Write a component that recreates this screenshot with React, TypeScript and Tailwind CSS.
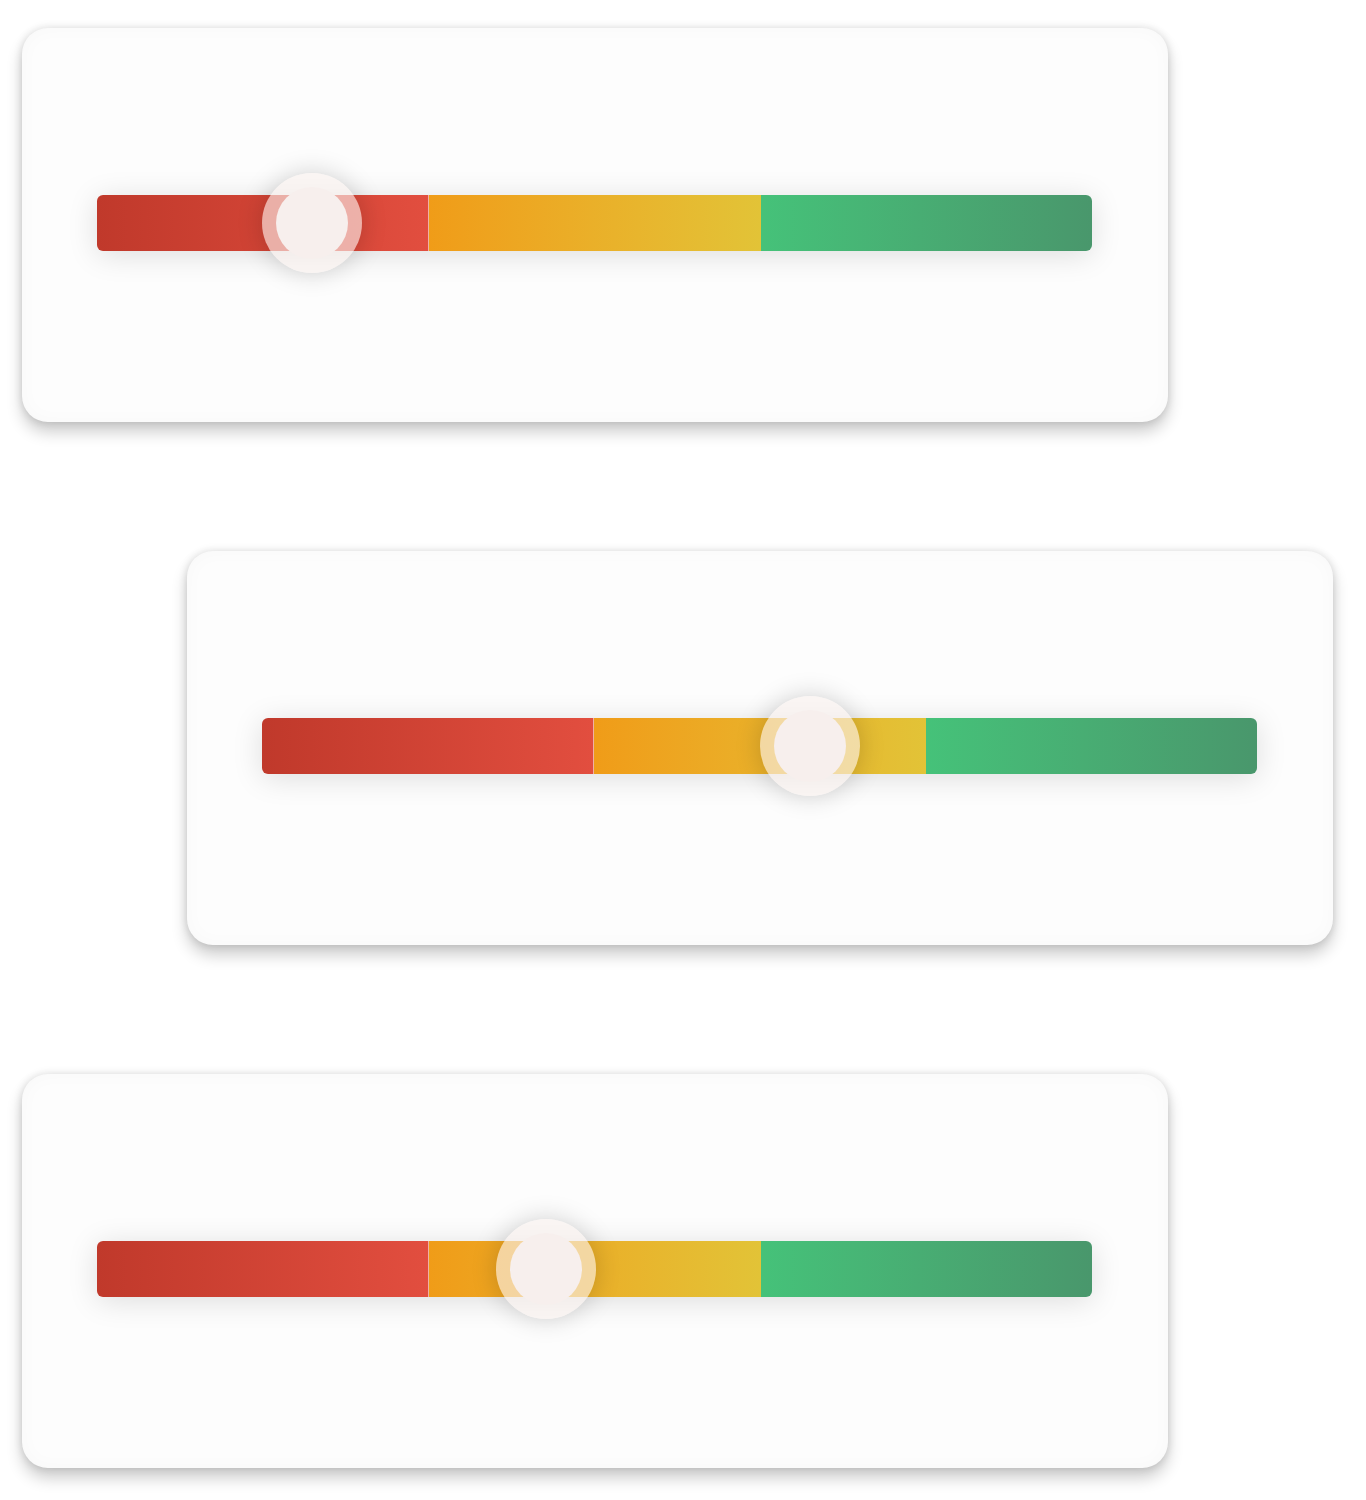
import React from "react";

type Scale = { value: number; shift?: boolean };

const scales: Scale[] = [
  { value: 21.6 },
  { value: 55.1, shift: true },
  { value: 45.1 },
];

function RiskBar({ value }: { value: number }) {
  return (
    <div className="relative h-[56px] w-[995px] rounded-[6px] shadow-[0_4px_30px_rgba(0,0,0,0.13)]">
      <div className="flex h-full w-full overflow-hidden rounded-[6px]">
        <div className="flex-1 bg-gradient-to-r from-[#c0392b] to-[#e24e3f]" />
        <div className="flex-1 border-l border-[#efb0a6] bg-gradient-to-r from-[#f09c18] to-[#e2c337]" />
        <div className="flex-1 bg-gradient-to-r from-[#45c279] to-[#49976c]" />
      </div>
      {/* thumb */}
      <div
        className="absolute top-1/2 flex h-[100px] w-[100px] -translate-x-1/2 -translate-y-1/2 items-center justify-center rounded-full bg-[rgba(248,240,238,0.62)] shadow-[0_0_26px_rgba(0,0,0,0.18)]"
        style={{ left: `${value}%` }}
      >
        <div className="h-[72px] w-[72px] rounded-full bg-[#f7efed]" />
      </div>
    </div>
  );
}

export default function App() {
  return (
    <div className="min-h-screen bg-white pb-[32px] pl-[22px] pt-[28px] font-['Inter',sans-serif]">
      <div className="flex flex-col gap-[129px]">
        {scales.map((s, i) => (
          <div
            key={i}
            className={`h-[394px] w-[1146px] rounded-[26px] bg-[#fdfdfd] px-[75px] pt-[167px] shadow-[0_10px_16px_rgba(0,0,0,0.2),0_0_8px_rgba(0,0,0,0.13),inset_0_0_20px_rgba(0,0,0,0.025)] ${
              s.shift ? "ml-[165px]" : ""
            }`}
          >
            <RiskBar value={s.value} />
          </div>
        ))}
      </div>
    </div>
  );
}
